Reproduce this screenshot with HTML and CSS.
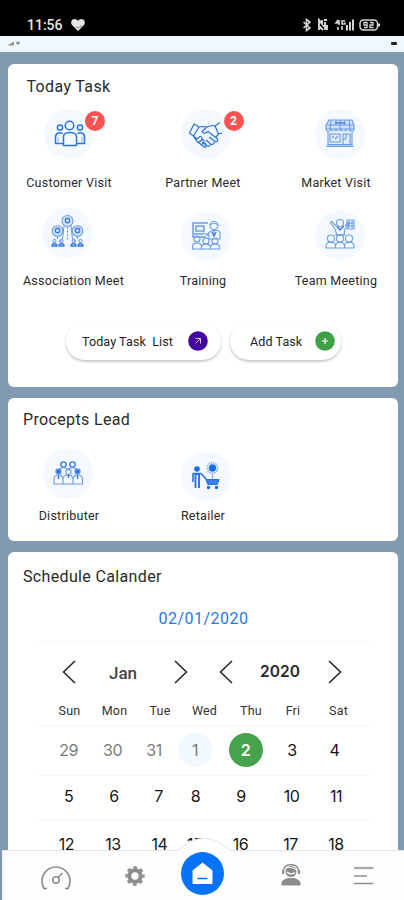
FILE: index.html
```html
<!DOCTYPE html>
<html lang="en">
<head>
    <meta charset="UTF-8">
    <meta name="viewport" content="width=device-width, initial-scale=1.0">
    <title>Today Task</title>
    <link rel="stylesheet" href="styles.css">
</head>
<body>
    <div class="status-bar">
        <span class="time">11:56</span>
        <svg class="heart" width="16" height="14" viewBox="0 0 16 14"><path d="M8 13 L2 7 C0 4 2 1 4.500 1 C6.500 1 7.500 2 8 3 C8.500 2 9.500 1 11.500 1 C14 1 16 4 14 7 Z" fill="#e8e8e8"/><path d="M6 9 L8.500 10 L10 8.500 L12 8" stroke="#777" fill="none"/></svg>
        <svg class="status-icons" width="80" height="14" viewBox="0 0 80 14" fill="none" stroke="#d4d4d4">
            <path d="M2.500 4 L9 10 L5.500 12.500 V1.500 L9 4 L2.500 10" stroke-width="1.600"/>
            <path d="M18 12 V2 L21 6 V2 M23 2 L26 2 M24 4 V12 M18 8 L22 12 M22 8 H26 V12" stroke-width="1.900"/>
            <path d="M37 2 L35 5 H39 M38 2 V7 M44 3 H41 V6 H44 V4.500 M37 9 V12 M41 8 V12" stroke-width="1.600"/>
            <path d="M46 7 V12.500 M49 4 V12.500 M52 1.500 V12.500" stroke-width="2"/>
            <rect x="59" y="2" width="17.500" height="10" rx="3.500" stroke-width="1.500"/>
            <path d="M78 5.500 V8.500" stroke-width="2"/>
            <path d="M66 7 H63 V4.500 H66 V9.500 H63 M69 4.500 H72 V7 H69 V9.500 H72.500" stroke-width="1.300"/>
        </svg>
    </div>
    <div class="sub-bar">
        <svg width="14" height="5" viewBox="0 0 14 5"><path d="M0 4.500 L7 0.500 V4.500 Z M8.500 1.500 L11 0.500 L13.500 1.500 L11 4 Z" fill="#8d9296"/></svg>
        <span class="sub-battery"></span>
    </div>

    <main>
        <section class="card tasks">
            <h2>Today Task</h2>
            <div class="task-grid">
                <div class="task">
                    <div class="icon">
                        <svg viewBox="0 0 50 50" class="bold">
                            <circle cx="25.500" cy="16.500" r="4.300"/>
                            <circle cx="16" cy="18.500" r="2.600"/>
                            <circle cx="36" cy="18.500" r="2.600"/>
                            <path d="M19.500 36.500 V27.500 C19.500 22 32.500 22 32.500 27.500 V36.500 Z"/>
                            <path d="M19 34.500 H11.500 V28 C11.500 24 15 23 18.500 24.500 M33 34.500 H40.500 V28 C40.500 24 37 23 33.500 24.500"/>
                            <path d="M14 28 V34 M38 28 V34" class="thin"/>
                        </svg>
                        <span class="badge">7</span>
                    </div>
                    <p>Customer Visit</p>
                </div>
                <div class="task">
                    <div class="icon shift-2">
                        <svg viewBox="0 0 50 50">
                            <path d="M13 15 L18 18 L12.500 27 L8.500 24 Z M39 13.500 L34 17 L37.500 25 L41.500 24"/>
                            <path d="M18 18 L22 17.500 L26 18 L31 16.500 L34 17 M26 18 L21 22.500 C22 25 25 24.500 27 22.500 L36 29.500 C38 31.500 35.500 34 33.500 32 L28 28 M37.500 25 L35 28"/>
                            <path d="M33 33 C33 36 31 36 29 34.500 L25 31 M29.500 35 C29 38 27 37.500 25.500 36.500 L21 33 M12.500 27 L16 30 L19 27.500 C22 27.500 21.500 30 20 31.500 C23 30 24.500 32 22 34.500 C25 33.500 26 36 24 38.500 L16 32.500 Z M20 31.500 L17.500 33.500 M22 34.500 L20 36"/>
                        </svg>
                        <span class="badge">2</span>
                    </div>
                    <p>Partner Meet</p>
                </div>
                <div class="task">
                    <div class="icon shift-3">
                        <svg viewBox="0 0 50 50" class="soft">
                            <path d="M14 11 H37 L39 16 V20 H11 V16 Z" fill="#cfe0fa"/>
                            <path d="M11 16 H39 M16 11 L15 20 M21 11 V16 M25 11 V20 M30 11 V16 M34 11 L35 20 M11 20 C12 23 15 23 16 20 C17 23 20 23 21 20 C22 23 25 23 26 20 C27 23 30 23 31 20 C32 23 34 23 35 20 C36 23 39 23 39 20"/>
                            <path d="M20 14 H30" class="strong"/>
                            <path d="M13 22 V36 H37 V22" fill="#e2edfc"/>
                            <path d="M11 37.500 H39 M12 35.500 H38"/>
                            <path d="M15 25 H25 V33 H15 Z M28 25 V35 M28 25 H35 V35 M17 29 L19 27 M20 30 L23 27 M31 25 V30 M28 30 H31"/>
                        </svg>
                    </div>
                    <p>Market Visit</p>
                </div>
                <div class="task">
                    <div class="icon shift-4">
                        <svg viewBox="0 0 50 50" class="soft">
                            <circle cx="25.500" cy="13" r="5.500" fill="#dbe8fb"/>
                            <circle cx="25.500" cy="12.500" r="2.200" class="strong"/>
                            <circle cx="15.500" cy="23" r="5.300" fill="#dbe8fb"/>
                            <circle cx="15.500" cy="22.500" r="2.200" class="strong"/>
                            <circle cx="35.500" cy="23" r="5.300" fill="#dbe8fb"/>
                            <circle cx="35.500" cy="22.500" r="2.200" class="strong"/>
                            <path d="M22 17.500 L20.500 31 M29 17.500 L30.500 31 M15.500 28 V31 M35.500 28 V31 M20 31 L17 34 M31 31 L34 34"/>
                            <path d="M25.500 19 V33" stroke-dasharray="2 1.500"/>
                            <circle cx="12.500" cy="33" r="1.500"/><circle cx="19.500" cy="33" r="1.500"/><circle cx="31.500" cy="33" r="1.500"/><circle cx="38.500" cy="33" r="1.500"/>
                            <path class="strong" d="M10 38 C10 35 15 35 15 38 Z M17 38 C17 35 22 35 22 38 Z M29 38 C29 35 34 35 34 38 Z M36 38 C36 35 41 35 41 38 Z"/>
                        </svg>
                    </div>
                    <p class="shift-label">Association Meet</p>
                </div>
                <div class="task">
                    <div class="icon shift-5">
                        <svg viewBox="0 0 50 50" class="soft">
                            <path d="M27 12 H12 V26 H25 M15 15 H23 V20 H15 Z M13 23 H22" stroke-width="1.500"/>
                            <circle cx="33" cy="14.500" r="4"/>
                            <path d="M29 14 C31 12 35 12 37 14 M26 25 C28 18 38 18 39 22 V28 H28 V24 L22 22 M33 20 V26"/>
                            <path d="M31 21 L33 25 L35 21" class="strong"/>
                            <circle cx="16" cy="28" r="3"/><circle cx="25" cy="30" r="3"/><circle cx="34" cy="30" r="3"/>
                            <path d="M11.500 38 V35 C12 31 20 31 20.500 35 V38 Z M20.500 38 V36 C21 32 29 32 29.500 36 V38 Z M29.500 38 V36 C30 32 38 32 38.500 36 V38 Z"/>
                        </svg>
                    </div>
                    <p>Training</p>
                </div>
                <div class="task">
                    <div class="icon shift-6">
                        <svg viewBox="0 0 50 50" class="soft">
                            <circle cx="25" cy="13" r="3.500"/>
                            <path d="M15 12 L20 19 L22 25 H29 L30 19 L35 13 M16 11 L21 16 M30 16 L34 12"/>
                            <path d="M22 16 L25 20 L29 16" class="strong"/>
                            <path d="M32 10 H39 V19 H32 Z M34 11 V18 M37 11 V18 M32 13 H39 M32 16 H39"/>
                            <path d="M20 25 H30"/>
                            <circle cx="16" cy="28.500" r="3.500"/><circle cx="25" cy="28.500" r="3.500"/><circle cx="34" cy="28.500" r="3.500"/>
                            <path d="M11 38 V36 C11 31 20 31 20.500 36 V38 Z M20.500 36 C21 31 29 31 29.500 36 V38 H20.500 M29.500 36 C30 31 39 31 39 36 V38 H29.500"/>
                        </svg>
                    </div>
                    <p>Team Meeting</p>
                </div>
            </div>
            <div class="actions">
                <button class="pill list-btn">Today Task&nbsp; List
                    <svg width="20" height="20" viewBox="0 0 20 20"><circle cx="10" cy="10" r="9.800" fill="#43039f"/><path d="M7.500 12.500 L12.500 7.500 M7.500 7.500 H12.500 V12.500" stroke="#d9c8f2" fill="none"/></svg>
                </button>
                <button class="pill add-btn">Add Task
                    <svg width="20" height="20" viewBox="0 0 20 20"><circle cx="10" cy="10" r="9.800" fill="#41a047"/><path d="M10 7 V13 M7 10 H13" stroke="#fff" stroke-width="1.200"/></svg>
                </button>
            </div>
        </section>

        <section class="card leads">
            <h2>Procepts Lead</h2>
            <div class="task-grid">
                <div class="task">
                    <div class="icon shift-7">
                        <svg viewBox="0 0 50 50" class="soft">
                            <circle cx="20.500" cy="15.500" r="2.600" class="strong"/>
                            <circle cx="29.500" cy="15.500" r="2.600" class="strong"/>
                            <path d="M16 21 C17 18 24 18 25 21 C26 18 33 18 34 21"/>
                            <circle cx="15.500" cy="22.500" r="2.600" fill="#2f78e6"/><circle cx="25.500" cy="23" r="2.600"/><circle cx="34.500" cy="22.500" r="2.600" fill="#2f78e6"/>
                            <path d="M11 35 V30 C11 27 13 26 15.500 26 C18 26 20 28 20 30 V35 Z M20 35 V30 C20 27 23 26 25.500 26 C28 26 30 28 30 30 V35 Z M30 35 V30 C30 28 32 26 34.500 26 C37 26 39.500 27 39.500 30 V35 Z"/>
                            <path d="M15.500 26 V30 M25.500 26 V29 M34.500 26 V30" class="strong"/>
                        </svg>
                    </div>
                    <p>Distributer</p>
                </div>
                <div class="task">
                    <div class="icon shift-8">
                        <svg viewBox="0 0 50 50">
                            <circle cx="16" cy="18" r="2.800" fill="#176bed" stroke="none"/>
                            <path d="M12 31 V22.500 H20 L25 28" stroke-width="1.600"/>
                            <path d="M14.500 23 H18 V37 M14.500 23 V37" stroke-width="1.900"/>
                            <circle cx="31.500" cy="17" r="3.200" fill="#176bed"/>
                            <circle cx="31.500" cy="17" r="5.300" stroke-width="1.400" stroke-dasharray="1.500 1" class="halo"/>
                            <path d="M31.500 23 V28" class="halo"/>
                            <path d="M25 28.500 H38 L36 33.500 H27 Z" fill="#3a7fec"/>
                            <circle cx="27.500" cy="36.500" r="1.200" fill="#176bed"/><circle cx="35.500" cy="36.500" r="1.200" fill="#176bed"/>
                        </svg>
                    </div>
                    <p>Retailer</p>
                </div>
            </div>
        </section>

        <section class="card calendar">
            <h2>Schedule Calander</h2>
            <div class="date">02/01/2020</div>
            <div class="pickers">
                <svg viewBox="0 0 14 24"><path d="M13 1 L1.500 12 L13 23"/></svg>
                <span class="month">Jan</span>
                <svg viewBox="0 0 14 24"><path d="M1 1 L12.500 12 L1 23"/></svg>
                <svg class="year-prev" viewBox="0 0 14 24"><path d="M13 1 L1.500 12 L13 23"/></svg>
                <span class="year">2020</span>
                <svg viewBox="0 0 14 24"><path d="M1 1 L12.500 12 L1 23"/></svg>
            </div>
            <div class="row weekdays">
                <span>Sun</span><span>Mon</span><span>Tue</span><span>Wed</span><span>Thu</span><span>Fri</span><span>Sat</span>
            </div>
            <div class="row week-1">
                <span class="muted">29</span><span class="muted">30</span><span class="muted">31</span><span class="muted today">1</span><span class="selected">2</span><span>3</span><span>4</span>
            </div>
            <div class="row week-2">
                <span>5</span><span>6</span><span>7</span><span>8</span><span>9</span><span>10</span><span>11</span>
            </div>
            <div class="row week-3">
                <span>12</span><span>13</span><span>14</span><span>15</span><span>16</span><span>17</span><span>18</span>
            </div>
        </section>
    </main>

    <nav class="bottom-nav">
        <svg class="nav-bg" width="402" height="64" viewBox="0 0 402 64"><path d="M0 14.500 H172 C182 14.500 184 2.500 202 2.500 C220 2.500 222 14.500 232 14.500 H403 V65 H0 Z" fill="#fefefe" stroke="#e2e2e2"/></svg>
        <div class="nav-items">
            <svg class="gauge" width="30" height="26" viewBox="0 0 30 26" fill="none" stroke="#8c8c8c" stroke-width="1.600"><path d="M3.500 25 A14 14 0 1 1 26.500 25 M2 24.500 H6 M24 24.500 H28"/><circle cx="15" cy="16" r="3.200"/><path d="M17 13.500 L21.500 9"/></svg>
            <svg class="gear" width="20" height="20" viewBox="0 0 20 20" fill="none" stroke="#8c8c8c"><circle cx="10" cy="10" r="5.700" stroke-width="4"/><circle cx="10" cy="10" r="8.500" stroke-width="2.400" stroke-dasharray="3.600 3.076" stroke-dashoffset="1.800"/></svg>
            <svg class="home" width="43" height="43" viewBox="0 0 43 43"><circle cx="21.500" cy="21.500" r="21.500" fill="#0472f9"/><path d="M21.500 11 L31 18.500 V31.500 H12 V18.500 Z" fill="#fff" stroke="#fff" stroke-linejoin="round"/><path d="M16.500 26.500 H26.500" stroke="#0472f9" stroke-width="1.500"/></svg>
            <svg class="agent" width="20" height="22" viewBox="0 0 20 22"><path d="M0.500 21.500 V18.500 C1.500 15.500 5 15 7 14 H13 C15 15 18.500 15.500 19.500 18.500 V21.500 Z" fill="#8c8c8c"/><circle cx="10" cy="7.500" r="5.500" fill="#8c8c8c"/><path d="M2.500 9 V6 C4 -1 16 -1 17.500 6 V9" fill="none" stroke="#8c8c8c" stroke-width="1.400"/><path d="M4.500 4.500 C7 2.500 11 3 15 5.500" fill="none" stroke="#fff"/><path d="M6 8 C8 10 11 10.500 14 8.500" fill="none" stroke="#fff" stroke-width="1.200"/><path d="M2 6 V10 M18 6 V10" stroke="#8c8c8c" stroke-width="2"/></svg>
            <svg class="menu" width="20" height="20" viewBox="0 0 20 20" stroke-width="1.700"><path d="M0 2 H19.500" stroke="#aaa" stroke-width="2.400"/><path d="M0 10 H13 M0 17.500 H19.500" stroke="#8f8f8f"/></svg>
        </div>
    </nav>
</body>
</html>
```

FILE: styles.css
```css
* {
    box-sizing: border-box;
}

body {
    margin: 0;
    height: 900px;
    overflow: hidden;
    background: #819ab1;
    color: #2a2a2a;
    font-family: Roboto, "Liberation Sans", sans-serif;
}

h2, p {
    margin: 0;
    font-weight: 400;
}

.status-bar {
    display: flex;
    align-items: center;
    height: 36px;
    padding: 14px 23px 0 27px;
    background: #000;
    color: #e6e6e6;
}

.time {
    width: 43px;
    font-size: 14px;
    font-weight: 500;
}

.status-icons {
    margin-left: auto;
}

.sub-bar {
    display: flex;
    justify-content: space-between;
    align-items: center;
    height: 15.500px;
    padding: 0 7px;
    background: #f1f8fd;
}

.sub-battery {
    width: 6px;
    height: 3px;
    border-radius: 1px;
    background: #222;
}

main {
    padding: 12.500px 6.500px 0 7.500px;
}

.card {
    margin-bottom: 11px;
    background: #fff;
    border-radius: 6px;
}

.card h2 {
    padding-left: 15.500px;
    font-size: 16px;
    line-height: 20px;
    letter-spacing: 0.35px;
}

.tasks {
    height: 322.500px;
    padding-top: 12.500px;
}

.card.tasks h2 {
    padding-left: 19px;
}

.task-grid {
    display: grid;
    grid-template-columns: 123px 145px 121px;
    grid-auto-rows: 98px;
    padding-top: 12.500px;
}

.task {
    display: flex;
    flex-direction: column;
    justify-content: space-between;
    align-items: center;
    height: 83px;
}

.task p {
    font-size: 12.500px;
    line-height: 18px;
    letter-spacing: 0.25px;
    white-space: nowrap;
}

.task .shift-label {
    margin-left: 9px;
}

.icon {
    position: relative;
    width: 50px;
    height: 50px;
    border-radius: 50%;
    background: #f3f9ff;
}

.icon svg {
    display: block;
    fill: none;
    stroke: #2b73de;
    stroke-width: 1.2;
    stroke-linejoin: round;
}

.icon .bold {
    stroke-width: 1.5;
}

.icon .thin {
    stroke: #8db3ee;
    stroke-width: 1;
}

.icon .soft {
    stroke: #6b9be6;
    stroke-width: 1.1;
}

.icon .strong {
    stroke: #3a7be0;
    stroke-width: 1.4;
}

.icon .halo {
    stroke: #7aa9f2;
}

.shift-2, .shift-5, .shift-8 {
    margin-left: 5px;
}

.shift-3, .shift-6 {
    margin-left: 7px;
}

.shift-4 {
    margin: 1px 4px 0 0;
}

.shift-5 {
    margin-top: 4px;
}

.shift-6 {
    margin-top: 3px;
}

.shift-7 {
    margin-right: 3px;
}

.shift-8 {
    margin-top: 2px;
}

.badge {
    position: absolute;
    top: 2px;
    left: 41px;
    width: 20px;
    height: 20px;
    border-radius: 50%;
    background: #fc5252;
    color: #fff;
    font-size: 12px;
    font-weight: 700;
    line-height: 20px;
    text-align: center;
}

.shift-2 .badge {
    left: 43px;
}

.actions {
    display: flex;
    gap: 9px;
    padding: 18px 0 0 58.500px;
}

.pill {
    display: flex;
    justify-content: space-between;
    align-items: center;
    height: 37px;
    padding: 0 13px 1px 16px;
    border: none;
    border-radius: 19px;
    background: #fff;
    box-shadow: 0 1.5px 3px rgba(0, 0, 0, 0.26);
    color: #222;
    font-family: inherit;
    font-size: 12.500px;
    letter-spacing: 0.1px;
}

.list-btn {
    width: 155px;
}

.add-btn {
    width: 111px;
    padding: 0 6px 1px 20px;
}

.leads {
    height: 143.500px;
    padding-top: 12px;
}

.leads .task-grid {
    padding-top: 19px;
}

.leads .task {
    height: 76px;
}

.calendar {
    height: 348px;
    padding-top: 14.500px;
    border-radius: 6px 6px 0 0;
}

.date {
    margin: 0 28px;
    height: 55px;
    padding: 22px 0 0 2px;
    border-bottom: 1px solid #f8f8f8;
    color: #2878e8;
    font-size: 16px;
    line-height: 20px;
    letter-spacing: 0.5px;
    text-align: center;
}

.pickers {
    display: flex;
    align-items: center;
    height: 60px;
    padding-left: 54px;
}

.pickers svg {
    width: 14px;
    height: 24px;
    fill: none;
    stroke: #222;
    stroke-width: 1.5;
}

.month, .year {
    text-align: center;
    font-size: 17px;
    font-weight: 500;
}

.month {
    width: 98px;
    padding: 2px 3px 0 0;
    color: #444;
}

.year {
    width: 95px;
    font-family: Inter, Roboto, sans-serif;
    font-size: 15.500px;
    font-weight: 600;
}

.year-prev {
    margin-left: 31px;
}

.row {
    display: grid;
    align-items: center;
    margin: 0 28px;
    border-bottom: 1px solid #f6f6f6;
    color: #151515;
    font-family: Inter, Roboto, sans-serif;
    font-size: 16px;
}

.row span {
    width: 34px;
    text-align: center;
    letter-spacing: -0.5px;
}

.weekdays {
    grid-template-columns: 45px 45.500px 44.500px 46.500px 42px 45.500px 34px;
    height: 24px;
    padding: 0 0 5px 17px;
    color: #333;
    font-family: Roboto, sans-serif;
    font-size: 12.500px;
}

.row.weekdays span {
    letter-spacing: 0.2px;
}

.week-1 {
    grid-template-columns: 44px 41.500px 41px 50.500px 46.500px 42.500px 34px;
    height: 50px;
    padding-left: 16px;
}

.week-2 {
    grid-template-columns: 45.500px 44.500px 37px 45.500px 50.500px 44.500px 34px;
    height: 45px;
    padding: 0 0 4px 16px;
}

.week-3 {
    grid-template-columns: 46.500px 46.500px 35px 46px 50px 45.500px 34px;
    height: 46px;
    padding-left: 14px;
    border: none;
}

.row .muted {
    color: #7b7b7b;
}

.row .today, .row .selected {
    height: 34px;
    border-radius: 50%;
    line-height: 34px;
}

.today {
    background: #f1f8fe;
}

.selected {
    background: #46a34c;
    color: #fff;
    font-weight: 600;
}

.bottom-nav {
    position: fixed;
    left: 2px;
    bottom: 0;
    width: 402px;
    height: 64px;
    overflow: hidden;
}

.nav-bg {
    position: absolute;
    top: 0;
    left: 0;
}

.nav-items {
    position: relative;
    display: flex;
    align-items: center;
    height: 64px;
    padding: 15px 30px 0 39px;
    justify-content: space-between;
}

.nav-items svg {
    flex: none;
}

.gauge {
    margin-top: 3px;
}

.gear {
    margin-right: -15px;
}

.home {
    margin: -5px 0 0 -2px;
}

.agent {
    margin: -1px 0 0 3px;
}

.menu {
    margin-top: 1px;
}
```
